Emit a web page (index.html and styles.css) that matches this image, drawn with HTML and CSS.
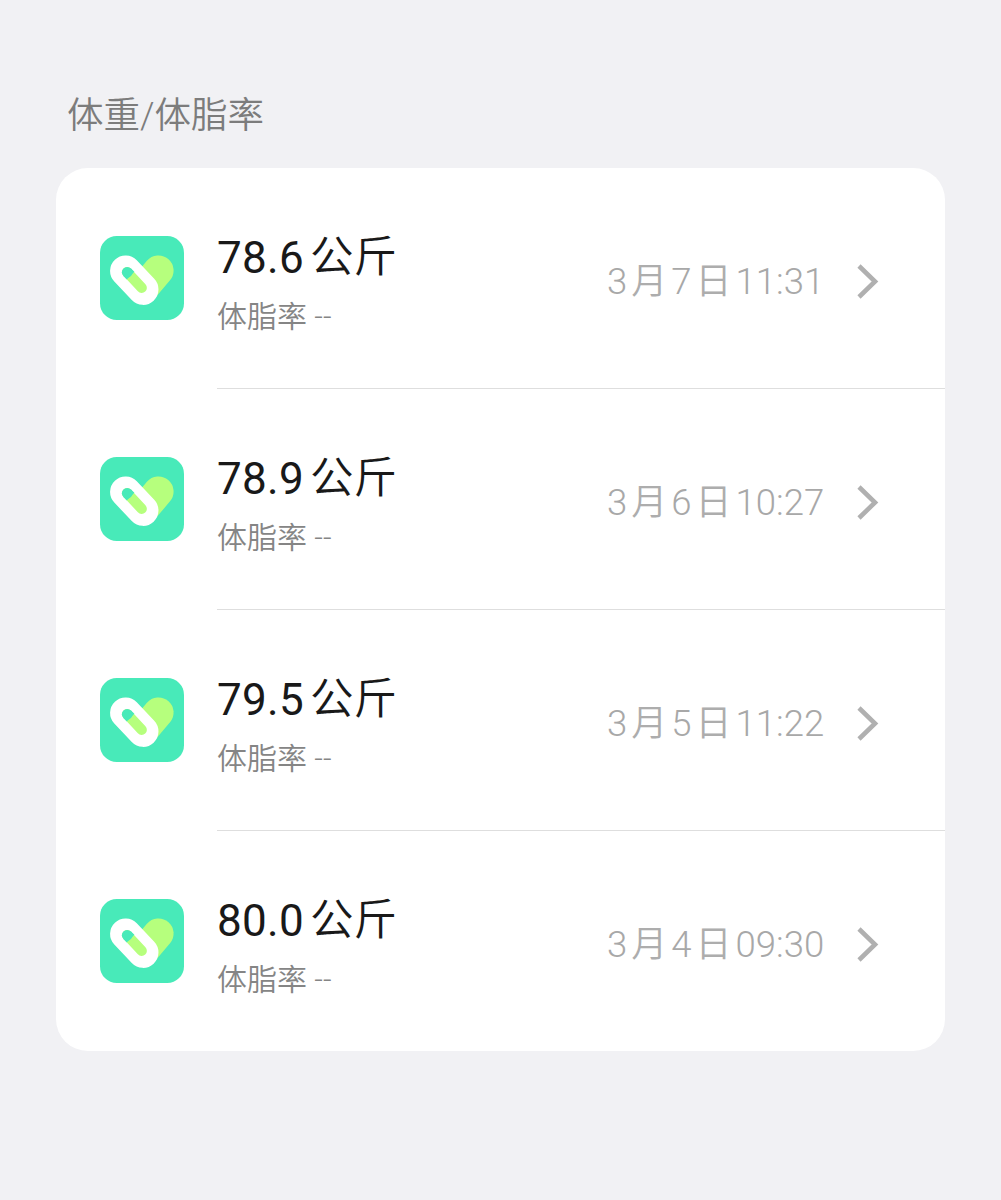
FILE: index.html
```html
<!DOCTYPE html>
<html lang="zh-CN">
<head>
	<meta charset="UTF-8">
	<meta name="viewport" content="width=device-width, initial-scale=1.0">
	<link rel="stylesheet" href="styles.css">
	<title>体重/体脂率</title>
</head>
<body>
	<svg class="defs" width="0" height="0">
		<symbol id="logo" viewBox="0 0 250 250">
			<rect width="250" height="250" rx="50" fill="#48eab9"/>
			<path d="M174 103L130 155" stroke="#b6ff7d" stroke-width="90" stroke-linecap="round"/>
			<path d="M76 104L128 159" stroke="#fff" stroke-width="92" stroke-linecap="round"/>
			<path d="M81 108L124 154" stroke="#b6ff7d" stroke-width="31" stroke-linecap="round"/>
			<path d="M81 108L91 118" stroke="#48eab9" stroke-width="32"/>
			<circle cx="81" cy="108" r="16" fill="#48eab9"/>
		</symbol>
		<symbol id="arrow" viewBox="0 0 24 36">
			<path d="M3 3L19 18.5L3 34" fill="none" stroke="#b0b0b0" stroke-width="4.6"/>
		</symbol>
	</svg>
	<h1 class="title">体重/体脂率</h1>
	<ul class="card">
		<li class="row">
			<svg class="logo"><use href="#logo"/></svg>
			<div class="info">
				<div class="data">
					<div class="weight">78.6<span class="unit">公斤</span></div>
					<div class="fat">体脂率 --</div>
				</div>
				<div class="time">3<span>月</span>7<span>日</span>11:31</div>
				<svg class="arrow"><use href="#arrow"/></svg>
			</div>
		</li>
		<li class="row">
			<svg class="logo"><use href="#logo"/></svg>
			<div class="info">
				<div class="data">
					<div class="weight">78.9<span class="unit">公斤</span></div>
					<div class="fat">体脂率 --</div>
				</div>
				<div class="time">3<span>月</span>6<span>日</span>10:27</div>
				<svg class="arrow"><use href="#arrow"/></svg>
			</div>
		</li>
		<li class="row">
			<svg class="logo"><use href="#logo"/></svg>
			<div class="info">
				<div class="data">
					<div class="weight">79.5<span class="unit">公斤</span></div>
					<div class="fat">体脂率 --</div>
				</div>
				<div class="time">3<span>月</span>5<span>日</span>11:22</div>
				<svg class="arrow"><use href="#arrow"/></svg>
			</div>
		</li>
		<li class="row">
			<svg class="logo"><use href="#logo"/></svg>
			<div class="info">
				<div class="data">
					<div class="weight">80.0<span class="unit">公斤</span></div>
					<div class="fat">体脂率 --</div>
				</div>
				<div class="time">3<span>月</span>4<span>日</span>09:30</div>
				<svg class="arrow"><use href="#arrow"/></svg>
			</div>
		</li>
	</ul>
</body>
</html>
```
FILE: styles.css
```css
*{
	box-sizing:border-box;
	margin:0;
	padding:0;
}
body{
	background:#f1f1f4;
	font-family:Roboto, "Noto Sans CJK SC", sans-serif;
	padding:89px 56px 0;
}
.defs{
	display:block;
}
.title{
	height:54px;
	line-height:54px;
	padding-left:11px;
	margin-bottom:25px;
	font-size:36.5px;
	font-weight:350;
	color:#7c7c7c;
}
.card{
	list-style:none;
	background:#fff;
	border-radius:32px;
	height:883px;
	overflow:hidden;
}
.row{
	display:flex;
	height:221px;
	padding-left:44px;
}
.logo{
	width:84px;
	height:84px;
	margin-top:68px;
	flex:none;
}
.info{
	display:flex;
	flex:1;
	margin-left:33px;
	padding-right:65px;
	border-bottom:1px solid #dedede;
}
.row:last-child .info{
	border-bottom:none;
}
.data{
	flex:1;
	padding-top:60px;
}
.weight{
	height:60px;
	line-height:60px;
	font-size:44px;
	letter-spacing:0.3px;
	color:#191919;
}
.unit{
	margin-left:6px;
	font-size:43.5px;
	font-weight:350;
	line-height:1;
	letter-spacing:0;
	vertical-align:1px;
}
.fat{
	height:46px;
	line-height:46px;
	padding-top:6px;
	font-size:30px;
	font-weight:350;
	color:#858585;
}
.time{
	width:217px;
	margin-right:32px;
	padding-top:87px;
	line-height:54px;
	font-size:36.5px;
	font-weight:350;
	white-space:nowrap;
	color:#a8a8a8;
}
.time span{
	margin:0 4px;
	font-size:36px;
	color:#adadad;
}
.arrow{
	width:24px;
	height:36px;
	margin-top:95px;
	flex:none;
}
```
